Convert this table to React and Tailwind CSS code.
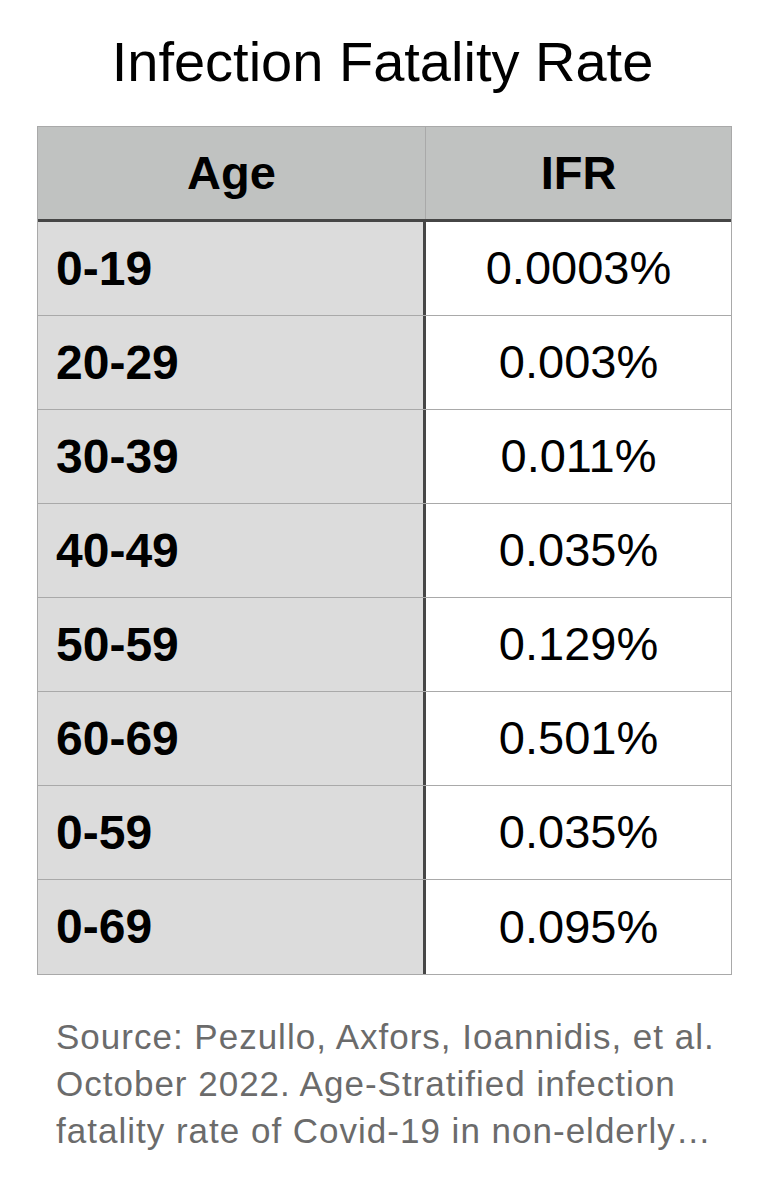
import React from "react";

const rows = [
  ["0-19", "0.0003%"],
  ["20-29", "0.003%"],
  ["30-39", "0.011%"],
  ["40-49", "0.035%"],
  ["50-59", "0.129%"],
  ["60-69", "0.501%"],
  ["0-59", "0.035%"],
  ["0-69", "0.095%"],
];

export default function App() {
  return (
    <div
      className="w-[765px] h-[1179px] bg-white text-black"
      style={{ fontFamily: '"Liberation Sans", Arial, sans-serif' }}
    >
      <h1 className="pt-[24px] h-[126px] text-center text-[56px] leading-[76px] font-normal">
        Infection Fatality Rate
      </h1>
      <div className="mx-[37px] w-[695px] border border-[#a9a9a9]">
        <div className="flex h-[95px] bg-[#c0c2c1] border-b-[3px] border-[#464646]">
          <div className="w-[388px] flex items-center justify-center text-[47px] font-bold border-r border-[#a9a9a9]">
            Age
          </div>
          <div className="flex-1 flex items-center justify-center text-[47px] font-bold">
            IFR
          </div>
        </div>
        {rows.map(([age, ifr], i) => (
          <div
            key={i}
            className={`flex h-[94px] ${i < rows.length - 1 ? "border-b border-[#a9a9a9]" : ""}`}
          >
            <div className="w-[388px] bg-[#dcdcdc] flex items-center pl-[18px] text-[48px] font-bold border-r-[3px] border-[#464646]">
              {age}
            </div>
            <div className="flex-1 bg-white flex items-center justify-center text-[47px]">
              {ifr}
            </div>
          </div>
        ))}
      </div>
      <div className="mt-[38px] pl-[56px] text-[35px] leading-[47px] tracking-[1px] text-[#6b6b6b]">
        <div>Source: Pezullo, Axfors, Ioannidis, et al.</div>
        <div>October 2022. Age-Stratified infection</div>
        <div>fatality rate of Covid-19 in non-elderly…</div>
      </div>
    </div>
  );
}
